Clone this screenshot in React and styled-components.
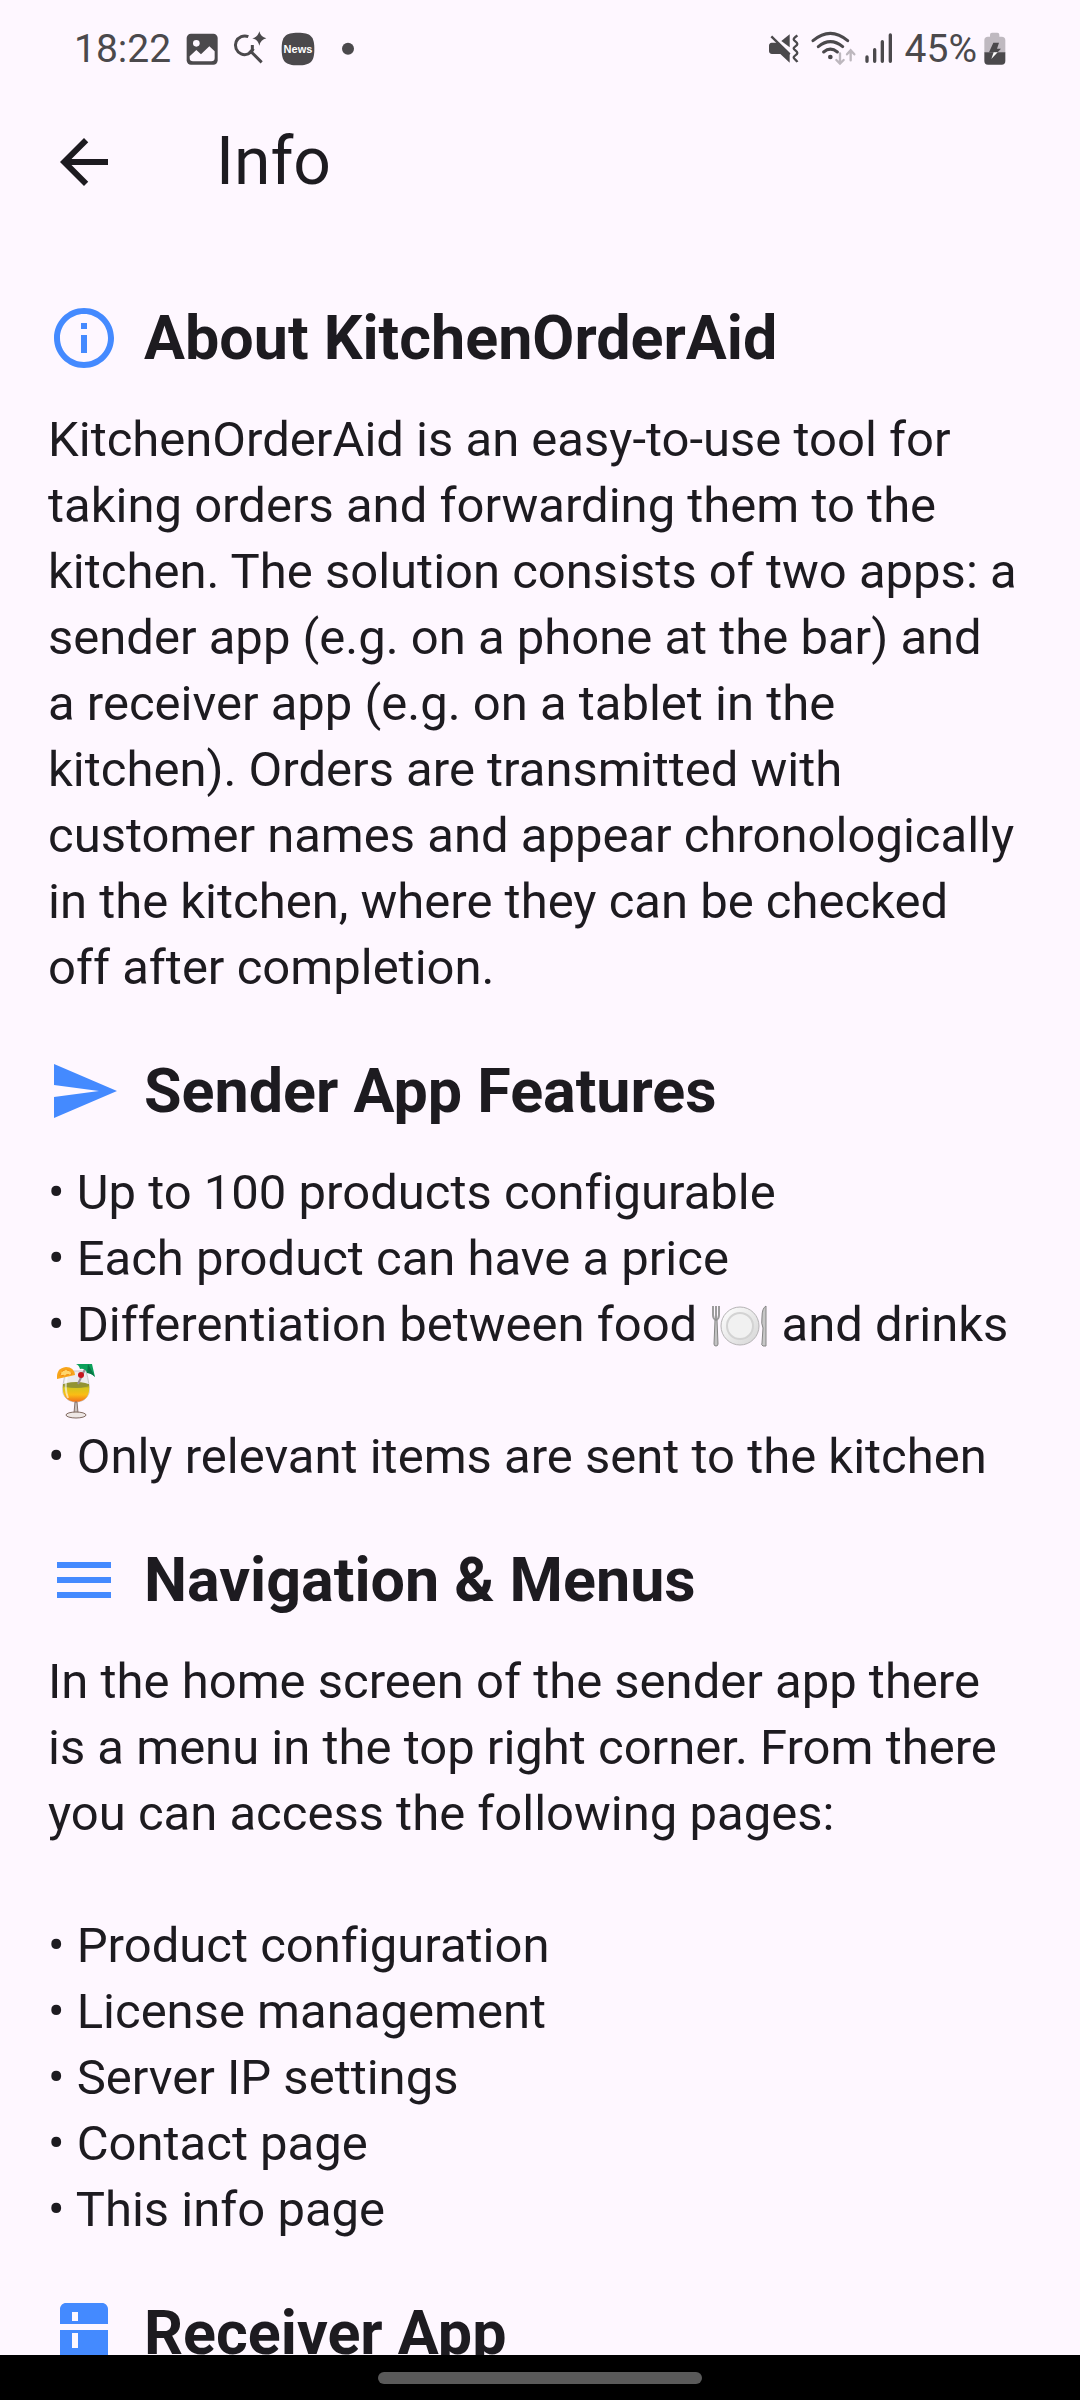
import React from "react";
import styled, { createGlobalStyle } from "styled-components";
import {
  MdArrowBack,
  MdInfoOutline,
  MdSend,
  MdMenu,
  MdKitchen,
} from "react-icons/md";

const GlobalStyle = createGlobalStyle`
  * {
    box-sizing: border-box;
  }
  body {
    margin: 0;
    background-color: #fef7ff;
    color: #1d1b20;
    font-family: Roboto, "Noto Sans", sans-serif;
    font-variant-ligatures: none;
  }
`;
const Screen = styled.div`
  display: flex;
  flex-direction: column;
  height: 100vh;
`;
const StatusBar = styled.div`
  display: flex;
  justify-content: space-between;
  flex-shrink: 0;
  height: 98px;
  padding: 0 74px;
  color: #4b494c;
`;
const StatusGroup = styled.div`
  display: flex;
  align-items: center;
  gap: ${(props) => props.$gap}px;
`;
const StatusText = styled.span`
  font-size: 39px;
  line-height: 44px;
`;
const StatusIcon = styled.svg`
  display: block;
  flex-shrink: 0;
  height: 36px;
`;
const AppBar = styled.header`
  display: flex;
  align-items: center;
  flex-shrink: 0;
  gap: 96px;
  height: 128px;
  padding: 0 48px;
`;
const BackButton = styled.button`
  display: flex;
  padding: 0;
  border: none;
  background: none;
  color: inherit;
  font-size: 72px;
  cursor: pointer;
`;
const Title = styled.h1`
  margin: 0;
  font-size: 66px;
  font-weight: 400;
  line-height: 84px;
`;
const Content = styled.main`
  display: flex;
  flex-direction: column;
  flex: 1;
  gap: 47px;
  min-height: 0;
  padding: 69px 48px 0;
  overflow: hidden;
`;
const Section = styled.section`
  display: flex;
  flex-direction: column;
  flex-shrink: 0;
  gap: 26px;
`;
const SectionHeader = styled.div`
  display: flex;
  align-items: center;
  gap: 24px;
  height: 86px;
  svg {
    flex-shrink: 0;
    color: #448aff;
    font-size: 72px;
  }
`;
const Heading = styled.h2`
  margin: 0;
  font-size: 61px;
  font-weight: 700;
  line-height: 84px;
`;
const Text = styled.p`
  margin: 0;
  font-size: 49px;
  line-height: 66px;
  white-space: pre-line;
`;
const Emoji = styled.svg`
  display: inline-block;
  width: 60px;
  height: 60px;
  vertical-align: text-bottom;
`;
const NavigationBar = styled.div`
  display: flex;
  justify-content: center;
  align-items: center;
  flex-shrink: 0;
  height: 45px;
  background-color: #000;
`;
const Handle = styled.div`
  width: 30%;
  height: 12px;
  border-radius: 6px;
  background-color: #5a5a5a;
`;

const PictureIcon = () => (
  <StatusIcon width="34" viewBox="379 49 102 108">
    <rect x="384" y="57" width="93" height="93" rx="13" fill="currentColor" />
    <circle cx="413" cy="86" r="10" fill="#fef7ff" />
    <path d="M393 125 413 106l14 13 25-24 16 15v20q0 10-10 10h-55q-10 0-10-10z" fill="#fef7ff" />
  </StatusIcon>
);
const SearchIcon = () => (
  <StatusIcon width="34" viewBox="525 49 102 108" fill="none">
    <path d="M571 66A28 28 0 1 0 586 103" stroke="currentColor" strokeWidth="9" />
    <path d="M580 112l31 31M583 91v14l-9 10" stroke="currentColor" strokeWidth="9" />
    <path d="M604 50q4 17 21 21-17 4-21 22-4-18-21-22 17-4 21-21z" fill="currentColor" />
  </StatusIcon>
);
const NewsIcon = () => (
  <StatusIcon width="34" viewBox="661 49 102 108">
    <path d="M712 54c38 0 49 11 49 49s-11 49-49 49-49-11-49-49 11-49 49-49z" fill="currentColor" />
    <text x="712" y="114" textAnchor="middle" fontSize="33" fontWeight="700" fontFamily="Liberation Sans, sans-serif" fill="#fff">News</text>
  </StatusIcon>
);
const DotIcon = () => (
  <StatusIcon width="26" viewBox="807 49 78 108">
    <circle cx="864" cy="102" r="18" fill="currentColor" />
  </StatusIcon>
);
const MutedIcon = () => (
  <StatusIcon width="36" viewBox="51 49 108 108" fill="none">
    <path d="M62 84h22l32 31v29L88 118H63q-9-1-9-9V93q0-8 8-9z" fill="currentColor" />
    <path d="M116 59v39L91 79z" fill="currentColor" />
    <path d="M61 65l55 54" stroke="currentColor" strokeWidth="7" />
    <path d="M139 62c-6 6-11 7-11 12s11 8 11 14-11 8-11 13 11 8 11 14-11 8-11 13 7 6 11 14" stroke="currentColor" strokeWidth="7" />
  </StatusIcon>
);
const WifiIcon = () => (
  <StatusIcon width="46" viewBox="183 49 138 108" fill="none" strokeLinecap="round">
    <path d="M189 78q52-44 104 0M205 96q36-30 73 0M221 112q20-17 41 0" stroke="currentColor" strokeWidth="9" />
    <circle cx="241" cy="127" r="7" fill="currentColor" />
    <path d="M270 116v30M259 136l11 11 11-11M302 137v-29M291 119l11-12 11 12" stroke="#bdb7be" strokeWidth="7" />
  </StatusIcon>
);
const SignalIcon = () => (
  <StatusIcon width="34" viewBox="342 49 102 108" fill="none" strokeLinecap="round">
    <path d="M351 127v13M374 105v35M397 81v59M421 61v79" stroke="currentColor" strokeWidth="10" />
  </StatusIcon>
);
const BatteryIcon = () => (
  <StatusIcon width="22" viewBox="704 49 66 108">
    <path d="M722 66v-6q0-6 6-6h16q6 0 6 6v6h7q11 0 11 11v37h-63V77q0-11 11-11z" fill="#bfb9c0" />
    <path d="M705 113h63v26q0 11-11 11h-41q-11 0-11-11z" fill="currentColor" />
    <path d="M732 84h17l-6 18h12l-10 11h-26z" fill="currentColor" />
    <path d="M733 113h12l-19 20z" fill="#fff" />
  </StatusIcon>
);

const PlateEmoji = () => (
  <Emoji viewBox="0 -3 60 60" role="img" aria-label="plate with cutlery">
    <defs>
      <linearGradient id="plate" x1="0" y1="0" x2="1" y2="1">
        <stop offset="0" stopColor="#fff" />
        <stop offset="1" stopColor="#d5d5d5" />
      </linearGradient>
    </defs>
    <circle cx="31" cy="30" r="19" fill="url(#plate)" stroke="#b5b3b5" />
    <circle cx="31" cy="30" r="13" fill="#f1f1f1" stroke="#d3d3d3" strokeWidth="2" />
    <path d="M4 10v9q0 4 3 5M10 10v9q0 4-3 5M7 10v14" fill="none" stroke="#9c9c9c" strokeWidth="2" />
    <path d="M6 24h2l1 24q0 2-2 2t-2-2z" fill="#c2c2c2" stroke="#858585" />
    <path d="M57 10v40h-3q-2-1-1-3l1-15q-2-4-1-11 0-9 4-11z" fill="#c6c6c6" stroke="#858585" />
  </Emoji>
);
const DrinkEmoji = () => (
  <Emoji viewBox="-6 0 60 60" role="img" aria-label="tropical drink">
    <defs>
      <linearGradient id="juice" x1="0" y1="0" x2="0" y2="1">
        <stop offset="0" stopColor="#8f9225" />
        <stop offset="0.25" stopColor="#d9c51c" />
        <stop offset="0.6" stopColor="#fbbd14" />
        <stop offset="1" stopColor="#f06d1b" />
      </linearGradient>
    </defs>
    <path d="M12 12q-4 14-3 22 3 9 13 9t13-9q1-8-3-22z" fill="#ecebed" stroke="#c9c7c9" />
    <path d="M9 25h26q2 17-13 18Q7 42 9 25z" fill="url(#juice)" />
    <ellipse cx="22" cy="26" rx="13" ry="3" fill="#929334" />
    <path d="M13 17q-3 12 1 22" fill="none" stroke="#fff" strokeOpacity="0.6" strokeWidth="2" />
    <path d="M24 25l8-17" stroke="#989098" strokeWidth="2" />
    <path d="M21 43h2l1 11h-4z" fill="#c9c1bd" stroke="#85716b" />
    <ellipse cx="22" cy="56" rx="10" ry="3" fill="#eee7e5" stroke="#806960" />
    <path d="M3 20Q2 9 12 8q8 0 9 8z" fill="#f7a51b" />
    <path d="M6 17q1-6 6-6 4 0 6 4z" fill="#ffd66b" stroke="#f1880c" strokeDasharray="3 2" />
    <circle cx="27" cy="16" r="3" fill="#c5161d" />
    <path d="M22 5h16l3 13q-4-4-8-4-2-5-7-4-1-4-4-5z" fill="#0ca05b" />
    <path d="M34 5l7 13q-4-4-8-4z" fill="#087545" />
  </Emoji>
);

const App = () => {
  return (
    <>
      <GlobalStyle />
      <Screen>
        <StatusBar>
          <StatusGroup $gap={14}>
            <StatusText>18:22</StatusText>
            <PictureIcon />
            <SearchIcon />
            <NewsIcon />
            <DotIcon />
          </StatusGroup>
          <StatusGroup $gap={7}>
            <MutedIcon />
            <WifiIcon />
            <SignalIcon />
            <StatusText>45%</StatusText>
            <BatteryIcon />
          </StatusGroup>
        </StatusBar>
        <AppBar>
          <BackButton type="button" aria-label="Back">
            <MdArrowBack />
          </BackButton>
          <Title>Info</Title>
        </AppBar>
        <Content>
          <Section>
            <SectionHeader>
              <MdInfoOutline />
              <Heading>About KitchenOrderAid</Heading>
            </SectionHeader>
            <Text>
              {"KitchenOrderAid is an easy-to-use tool for\n"}
              {"taking orders and forwarding them to the\n"}
              {"kitchen. The solution consists of two apps: a\n"}
              {"sender app (e.g. on a phone at the bar) and\n"}
              {"a receiver app (e.g. on a tablet in the\n"}
              {"kitchen). Orders are transmitted with\n"}
              {"customer names and appear chronologically\n"}
              {"in the kitchen, where they can be checked\n"}
              {"off after completion."}
            </Text>
          </Section>
          <Section>
            <SectionHeader>
              <MdSend />
              <Heading>Sender App Features</Heading>
            </SectionHeader>
            <Text>
              {"• Up to 100 products configurable\n"}
              {"• Each product can have a price\n"}
              {"• Differentiation between food "}
              <PlateEmoji />
              {" and drinks\n"}
              <DrinkEmoji />
              {"\n• Only relevant items are sent to the kitchen"}
            </Text>
          </Section>
          <Section>
            <SectionHeader>
              <MdMenu />
              <Heading>Navigation &amp; Menus</Heading>
            </SectionHeader>
            <Text>
              {"In the home screen of the sender app there\n"}
              {"is a menu in the top right corner. From there\n"}
              {"you can access the following pages:\n\n"}
              {"• Product configuration\n"}
              {"• License management\n"}
              {"• Server IP settings\n"}
              {"• Contact page\n"}
              {"• This info page"}
            </Text>
          </Section>
          <Section>
            <SectionHeader>
              <MdKitchen />
              <Heading>Receiver App</Heading>
            </SectionHeader>
          </Section>
        </Content>
        <NavigationBar>
          <Handle />
        </NavigationBar>
      </Screen>
    </>
  );
};
export default App;
